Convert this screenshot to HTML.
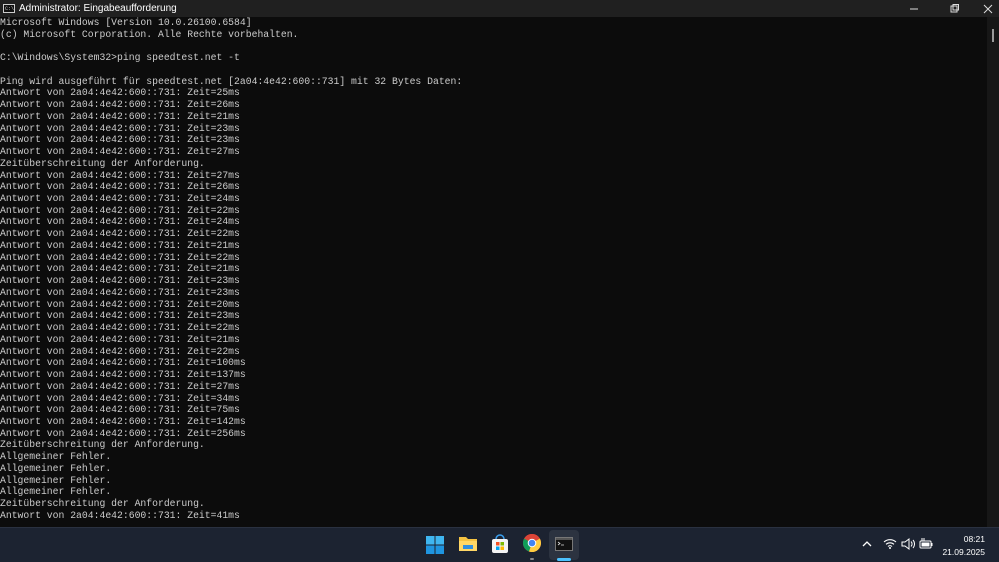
<!DOCTYPE html>
<html><head><meta charset="utf-8"><style>
*{margin:0;padding:0;box-sizing:border-box}
body{width:999px;height:562px;overflow:hidden;background:#0c0c0c;position:relative;font-family:"Liberation Sans",sans-serif}
#tb{position:absolute;left:0;top:0;width:999px;height:17px;background:#202020;color:#fff;font-size:10px}
#tb .t{position:absolute;left:19px;top:3px}
#con{position:absolute;left:0;top:17px;width:987px;height:510px;background:#0c0c0c;color:#cccccc;font-family:"Liberation Mono",monospace;font-size:9.75px;line-height:11.74px;white-space:pre}
#sb{position:absolute;left:987px;top:17px;width:12px;height:510px;background:#171717}
#sb i{position:absolute;left:5px;top:12px;width:2px;height:13px;background:#9a9a9a}
#task{position:absolute;left:0;top:527px;width:999px;height:35px;background:#1c2331;border-top:1px solid #2a3140}
.clk{position:absolute;right:14px;top:5px;color:#fff;font-size:8.5px;text-align:right;line-height:13px}
</style></head><body>
<div id="tb">
<svg style="position:absolute;left:3px;top:4px" width="12" height="9"><rect x="0.5" y="0.5" width="11" height="8" fill="#111" stroke="#ccc"/><text x="2" y="6" fill="#ccc" font-size="5" font-family="Liberation Mono">C:\</text></svg>
<span class="t">Administrator: Eingabeaufforderung</span>
<svg style="position:absolute;left:908px;top:4px" width="90" height="10"><line x1="2" y1="5" x2="10" y2="5" stroke="#ddd"/><rect x="43" y="2" width="6" height="6" fill="none" stroke="#ddd"/><rect x="45" y="0.5" width="5.5" height="5.5" fill="none" stroke="#ddd"/><path d="M76 1L84 9M84 1L76 9" stroke="#ddd"/></svg>
</div>
<div id="con">Microsoft Windows [Version 10.0.26100.6584]
(c) Microsoft Corporation. Alle Rechte vorbehalten.

C:\Windows\System32>ping speedtest.net -t

Ping wird ausgeführt für speedtest.net [2a04:4e42:600::731] mit 32 Bytes Daten:
Antwort von 2a04:4e42:600::731: Zeit=25ms
Antwort von 2a04:4e42:600::731: Zeit=26ms
Antwort von 2a04:4e42:600::731: Zeit=21ms
Antwort von 2a04:4e42:600::731: Zeit=23ms
Antwort von 2a04:4e42:600::731: Zeit=23ms
Antwort von 2a04:4e42:600::731: Zeit=27ms
Zeitüberschreitung der Anforderung.
Antwort von 2a04:4e42:600::731: Zeit=27ms
Antwort von 2a04:4e42:600::731: Zeit=26ms
Antwort von 2a04:4e42:600::731: Zeit=24ms
Antwort von 2a04:4e42:600::731: Zeit=22ms
Antwort von 2a04:4e42:600::731: Zeit=24ms
Antwort von 2a04:4e42:600::731: Zeit=22ms
Antwort von 2a04:4e42:600::731: Zeit=21ms
Antwort von 2a04:4e42:600::731: Zeit=22ms
Antwort von 2a04:4e42:600::731: Zeit=21ms
Antwort von 2a04:4e42:600::731: Zeit=23ms
Antwort von 2a04:4e42:600::731: Zeit=23ms
Antwort von 2a04:4e42:600::731: Zeit=20ms
Antwort von 2a04:4e42:600::731: Zeit=23ms
Antwort von 2a04:4e42:600::731: Zeit=22ms
Antwort von 2a04:4e42:600::731: Zeit=21ms
Antwort von 2a04:4e42:600::731: Zeit=22ms
Antwort von 2a04:4e42:600::731: Zeit=100ms
Antwort von 2a04:4e42:600::731: Zeit=137ms
Antwort von 2a04:4e42:600::731: Zeit=27ms
Antwort von 2a04:4e42:600::731: Zeit=34ms
Antwort von 2a04:4e42:600::731: Zeit=75ms
Antwort von 2a04:4e42:600::731: Zeit=142ms
Antwort von 2a04:4e42:600::731: Zeit=256ms
Zeitüberschreitung der Anforderung.
Allgemeiner Fehler.
Allgemeiner Fehler.
Allgemeiner Fehler.
Allgemeiner Fehler.
Zeitüberschreitung der Anforderung.
Antwort von 2a04:4e42:600::731: Zeit=41ms</div>
<div id="sb"><i></i></div>
<div id="task">
<svg style="position:absolute;left:426px;top:8px" width="18" height="18"><rect x="0" y="0" width="8.5" height="8.5" fill="#3fb6f0"/><rect x="9.5" y="0" width="8.5" height="8.5" fill="#3fb6f0"/><rect x="0" y="9.5" width="8.5" height="8.5" fill="#1f95e0"/><rect x="9.5" y="9.5" width="8.5" height="8.5" fill="#1f95e0"/></svg>
<svg style="position:absolute;left:458px;top:6px" width="20" height="18"><path d="M1 3h7l2 2h9v12H1z" fill="#f5c342"/><rect x="1" y="7" width="18" height="10" fill="#ffd766"/><rect x="5" y="11" width="10" height="4" fill="#2f8ee0"/></svg>
<svg style="position:absolute;left:491px;top:6px" width="18" height="20"><path d="M5 5a4 4 0 0 1 8 0" fill="none" stroke="#3aa0f0" stroke-width="1.5"/><rect x="1" y="5" width="16" height="14" rx="2" fill="#f4f4f4"/><rect x="5" y="8" width="3.5" height="3.5" fill="#f25022"/><rect x="9.5" y="8" width="3.5" height="3.5" fill="#7fba00"/><rect x="5" y="12.5" width="3.5" height="3.5" fill="#00a4ef"/><rect x="9.5" y="12.5" width="3.5" height="3.5" fill="#ffb900"/></svg>
<svg style="position:absolute;left:523px;top:6px" width="18" height="18" viewBox="0 0 18 18"><circle cx="9" cy="9" r="9" fill="#db4437"/><path d="M9 9L1.2 4.5A9 9 0 0 0 6 17.5z" fill="#0f9d58"/><path d="M9 9L6 17.5A9 9 0 0 0 16.8 4.5z" fill="#ffcd40"/><path d="M9 9L16.8 4.5A9 9 0 0 0 1.2 4.5z" fill="#db4437"/><circle cx="9" cy="9" r="4.3" fill="#fff"/><circle cx="9" cy="9" r="3.3" fill="#4285f4"/></svg>
<div style="position:absolute;left:530px;top:30px;width:4px;height:2px;background:#888;border-radius:1px"></div>
<div style="position:absolute;left:549px;top:2px;width:30px;height:30px;background:#2c3340;border-radius:4px"></div>
<svg style="position:absolute;left:555px;top:9px" width="18" height="14"><rect x="0.5" y="0.5" width="17" height="13" fill="#111" stroke="#777"/><rect x="1" y="1" width="16" height="2" fill="#555"/><path d="M3 5l2 1.5L3 8M6 8h3" stroke="#ddd" fill="none" stroke-width="0.8"/></svg>
<div style="position:absolute;left:557px;top:30px;width:14px;height:3px;background:#4cc2ff;border-radius:2px"></div>
<svg style="position:absolute;left:862px;top:12px" width="10" height="7"><path d="M1 6L5 2L9 6" stroke="#fff" fill="none" stroke-width="1.3"/></svg>
<svg style="position:absolute;left:883px;top:10px" width="14" height="11"><path d="M1 4a9 9 0 0 1 12 0M3 6.3a6 6 0 0 1 8 0M5 8.5a3 3 0 0 1 4 0" stroke="#fff" fill="none" stroke-width="1.1"/><circle cx="7" cy="10" r="1" fill="#fff"/></svg>
<svg style="position:absolute;left:901px;top:10px" width="14" height="12"><path d="M1 4h3l4-3v10L4 8H1z" stroke="#fff" fill="none"/><path d="M10 3.5a3.5 3.5 0 0 1 0 5M12 2a6 6 0 0 1 0 8" stroke="#fff" fill="none"/></svg>
<svg style="position:absolute;left:919px;top:10px" width="14" height="11"><rect x="1" y="3" width="11" height="7" rx="1" fill="none" stroke="#fff"/><rect x="2.5" y="4.5" width="8" height="4" fill="#fff"/><rect x="12" y="5" width="1.5" height="3" fill="#fff"/><path d="M3 0v3M5 0v3" stroke="#fff"/></svg>
<div class="clk">08:21<br>21.09.2025</div>
</div>
</body></html>
